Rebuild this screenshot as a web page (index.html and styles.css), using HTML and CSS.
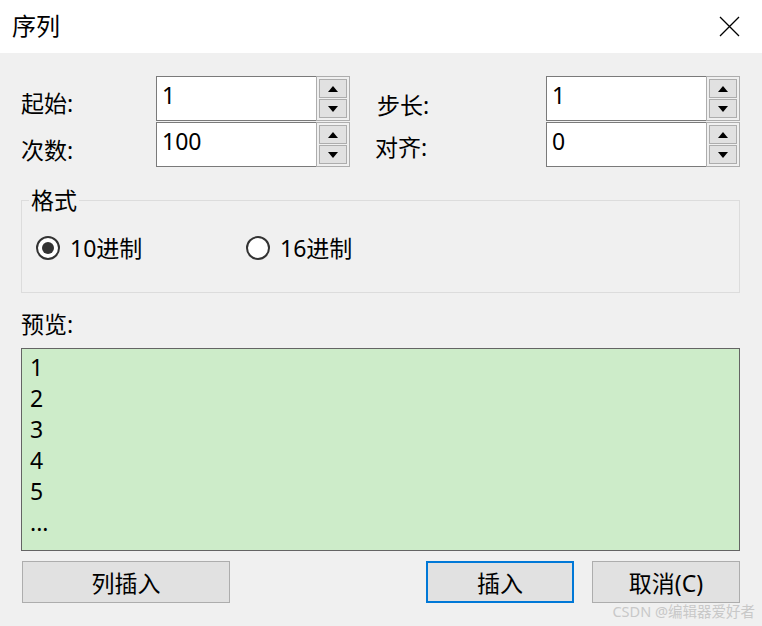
FILE: index.html
```html
<!DOCTYPE html>
<html lang="zh-CN">
<head>
    <meta charset="UTF-8">
    <title>序列</title>
    <link rel="stylesheet" href="styles.css">
</head>
<body>
    <div class="dialog">
        <div class="titlebar">
            <span class="title">序列</span>
            <span class="close">
                <svg width="21" height="21" viewBox="0 0 21 21"><path d="M1 1 L20 20 M20 1 L1 20" stroke="#000" stroke-width="1.3" fill="none"/></svg>
            </span>
        </div>

        <div class="content">
            <div class="fields">
                <label class="lbl lbl-start">起始:</label>
                <div class="spin">
                    <div class="spin-edit">1</div>
                    <div class="spin-btns">
                        <div class="spin-btn"><span class="arrow up"></span></div>
                        <div class="spin-btn"><span class="arrow down"></span></div>
                    </div>
                </div>
                <div></div>
                <label class="lbl lbl-step">步长:</label>
                <div class="spin">
                    <div class="spin-edit">1</div>
                    <div class="spin-btns">
                        <div class="spin-btn"><span class="arrow up"></span></div>
                        <div class="spin-btn"><span class="arrow down"></span></div>
                    </div>
                </div>

                <label class="lbl lbl-count">次数:</label>
                <div class="spin">
                    <div class="spin-edit">100</div>
                    <div class="spin-btns">
                        <div class="spin-btn"><span class="arrow up"></span></div>
                        <div class="spin-btn"><span class="arrow down"></span></div>
                    </div>
                </div>
                <div></div>
                <label class="lbl lbl-align">对齐:</label>
                <div class="spin">
                    <div class="spin-edit">0</div>
                    <div class="spin-btns">
                        <div class="spin-btn"><span class="arrow up"></span></div>
                        <div class="spin-btn"><span class="arrow down"></span></div>
                    </div>
                </div>
            </div>

            <fieldset class="group">
                <legend>格式</legend>
                <div class="radios">
                    <div class="radio radio-dec"><span class="circle checked"></span>10进制</div>
                    <div class="radio"><span class="circle"></span>16进制</div>
                </div>
            </fieldset>

            <div class="preview-label">预览:</div>
            <div class="preview">
                <div>1</div>
                <div>2</div>
                <div>3</div>
                <div>4</div>
                <div>5</div>
                <div>...</div>
            </div>

            <div class="buttons">
                <button class="btn btn-wide">列插入</button>
                <div class="spacer"></div>
                <button class="btn btn-default">插入</button>
                <button class="btn">取消(C)</button>
            </div>
        </div>

        <div class="watermark">CSDN @编辑器爱好者</div>
    </div>
</body>
</html>
```

FILE: styles.css
```css
* {
    box-sizing: border-box;
    margin: 0;
    padding: 0;
}

body {
    font-family: "Noto Sans", "Noto Sans CJK SC", sans-serif;
    background-color: #f0f0f0;
    color: #000;
}

.dialog {
    position: relative;
    width: 762px;
    height: 626px;
    background-color: #f0f0f0;
}

.titlebar {
    height: 53px;
    background-color: #fff;
    display: flex;
    align-items: center;
    justify-content: space-between;
    padding: 0 22px 2px 12px;
}

.title {
    font-size: 24px;
    line-height: 30px;
}

.close {
    display: flex;
    padding-top: 1px;
}

.content {
    padding: 23px 22px 0 21px;
}

.fields {
    display: grid;
    grid-template-columns: 135px 194px 25px 171px 194px;
    grid-auto-rows: 45px;
    row-gap: 1px;
}

.lbl {
    font-size: 23px;
    line-height: 30px;
    display: flex;
    align-items: center;
}

.lbl-start {
    padding-top: 9px;
}

.lbl-step {
    padding-top: 12px;
    padding-left: 2px;
}

.lbl-count {
    padding-top: 10px;
}

.lbl-align {
    padding-top: 4px;
}

.spin {
    display: flex;
}

.spin-edit {
    flex: 1;
    background-color: #fff;
    border: 1px solid #7a7a7a;
    border-right: none;
    font-size: 23px;
    line-height: 36px;
    padding-left: 5px;
}

.spin-btns {
    width: 34px;
    border: 1px solid #adadad;
    padding: 2px;
    display: flex;
    flex-direction: column;
    gap: 1px;
    background-color: #f0f0f0;
}

.spin-btn {
    flex: 1;
    background-color: #e1e1e1;
    border: 1px solid #adadad;
    display: flex;
    align-items: center;
    justify-content: center;
}

.arrow {
    width: 0;
    height: 0;
    border-left: 5px solid transparent;
    border-right: 5px solid transparent;
}

.arrow.up {
    border-bottom: 6px solid #000;
}

.arrow.down {
    border-top: 6px solid #000;
}

.group {
    margin-top: 20px;
    height: 106px;
    border: 1px solid #dcdcdc;
    padding: 0 14px;
}

.group legend {
    font-size: 23px;
    line-height: 26px;
    padding: 0 2px;
    margin-left: -7px;
}

.radios {
    display: flex;
    padding-top: 20px;
}

.radio {
    display: flex;
    align-items: center;
    font-size: 23px;
    line-height: 30px;
}

.radio-dec {
    width: 210px;
}

.circle {
    width: 24px;
    height: 24px;
    border: 2px solid #333;
    border-radius: 50%;
    background-color: #fff;
    margin-right: 10px;
    display: flex;
    align-items: center;
    justify-content: center;
}

.circle.checked::after {
    content: "";
    width: 12px;
    height: 12px;
    border-radius: 50%;
    background-color: #333;
}

.preview-label {
    font-size: 23px;
    line-height: 30px;
    margin-top: 16px;
}

.preview {
    margin-top: 9px;
    height: 203px;
    background-color: #cdecc9;
    border: 1px solid #646464;
    padding: 3px 8px;
    font-size: 23px;
    line-height: 31px;
}

.buttons {
    display: flex;
    gap: 18px;
    margin-top: 10px;
    padding-left: 1px;
}

.spacer {
    flex: 1;
}

.btn {
    font-family: "Noto Sans", "Noto Sans CJK SC", sans-serif;
    font-size: 23px;
    height: 42px;
    width: 148px;
    background-color: #e1e1e1;
    border: 1px solid #adadad;
    color: #000;
}

.btn-wide {
    width: 208px;
}

.btn-default {
    border: 2px solid #0078d7;
}

.watermark {
    position: absolute;
    right: 7px;
    bottom: 6px;
    font-size: 14.5px;
    color: #c8c8c8;
    line-height: 18px;
}
```
